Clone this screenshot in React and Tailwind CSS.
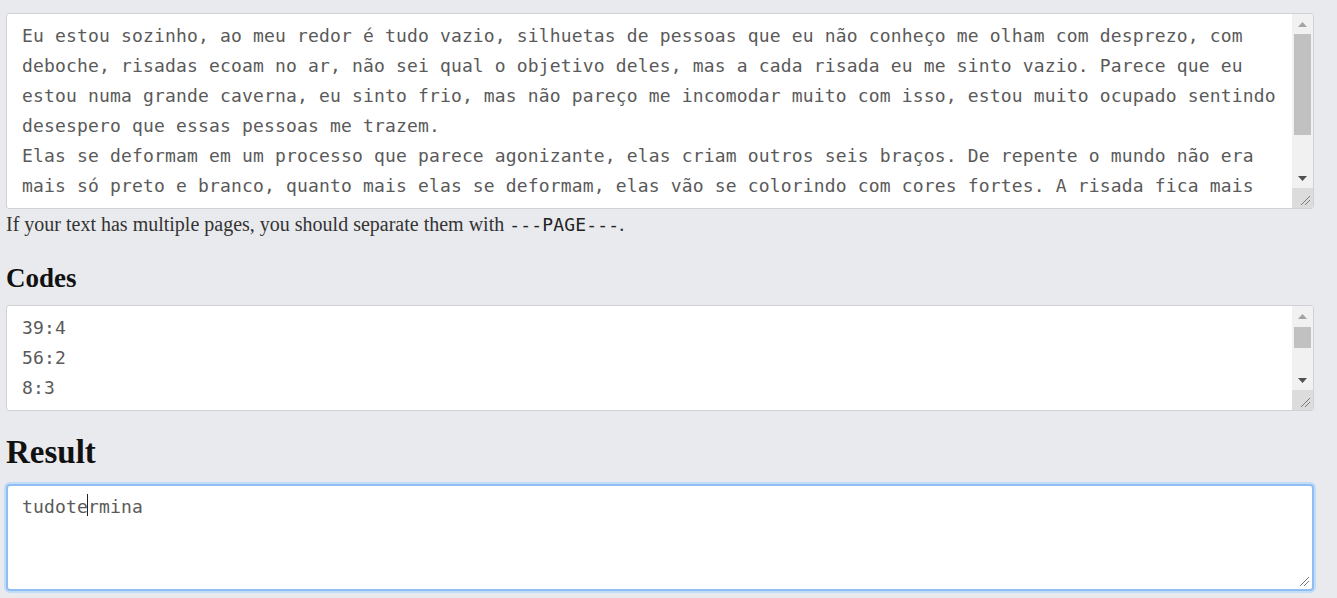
import React from "react";

const mono = { fontFamily: '"DejaVu Sans Mono", "Liberation Mono", monospace' };
const serif = { fontFamily: '"Liberation Serif", "DejaVu Serif", serif' };

function Arrow({ dir, color }) {
  return (
    <svg width="9" height="5" viewBox="0 0 9 5">
      {dir === "up" ? (
        <polygon points="0,5 9,5 4.5,0" fill={color} />
      ) : (
        <polygon points="0,0 9,0 4.5,5" fill={color} />
      )}
    </svg>
  );
}

function Grip() {
  return (
    <svg width="12" height="12" viewBox="0 0 12 12">
      <line x1="2" y1="11" x2="11" y2="2" stroke="#7a7a7a" strokeWidth="1" />
      <line x1="6" y1="11" x2="11" y2="6" stroke="#7a7a7a" strokeWidth="1" />
    </svg>
  );
}

function Scrollbar({ thumbTop, thumbHeight }) {
  return (
    <div className="flex w-[21px] shrink-0 flex-col">
      <div className="flex flex-1 flex-col bg-[#f1f1f1]">
        <div className="flex h-[20px] items-center justify-center">
          <Arrow dir="up" color="#a3a3a3" />
        </div>
        <div className="flex flex-1 flex-col px-[2px]">
          <div style={{ height: thumbTop }} />
          <div className="bg-[#c1c1c1]" style={{ height: thumbHeight }} />
        </div>
        <div className="flex h-[20px] items-center justify-center">
          <Arrow dir="down" color="#505050" />
        </div>
      </div>
      <div className="flex h-[20px] items-end justify-end bg-[#dcdcdc] pb-[2px] pr-[2px]">
        <Grip />
      </div>
    </div>
  );
}

const storyLines = [
  "Eu estou sozinho, ao meu redor é tudo vazio, silhuetas de pessoas que eu não conheço me olham com desprezo, com",
  "deboche, risadas ecoam no ar, não sei qual o objetivo deles, mas a cada risada eu me sinto vazio. Parece que eu",
  "estou numa grande caverna, eu sinto frio, mas não pareço me incomodar muito com isso, estou muito ocupado sentindo",
  "desespero que essas pessoas me trazem.",
  "Elas se deformam em um processo que parece agonizante, elas criam outros seis braços. De repente o mundo não era",
  "mais só preto e branco, quanto mais elas se deformam, elas vão se colorindo com cores fortes. A risada fica mais",
];

function TextLines({ lines }) {
  return (
    <div
      className="flex-1 overflow-hidden pl-[15px] pt-[7px] text-[18px] leading-[30px] tracking-[0.16px] text-[#5a5a5a]"
      style={mono}
    >
      {lines.map((l, i) => (
        <div key={i} className="whitespace-pre">
          {l}
        </div>
      ))}
    </div>
  );
}

export default function App() {
  return (
    <div className="min-h-[598px] w-full bg-[#e9eaee] pl-[6px] pt-[13px]">
      <div className="w-[1308px]">
        <div className="flex h-[196px] overflow-hidden rounded-[3px] border border-[#cfd1d5] bg-white">
          <TextLines lines={storyLines} />
          <Scrollbar thumbTop={0} thumbHeight={101} />
        </div>

        <p className="h-[30px] text-[20px] leading-[30px] text-[#333]" style={serif}>
          If your text has multiple pages, you should separate them with{" "}
          <span className="text-[18px] tracking-[0.16px] text-[#222]" style={mono}>
            ---PAGE---
          </span>
          .
        </p>

        <h2
          className="mt-[24px] h-[30px] text-[27px] font-bold leading-[30px] text-[#111]"
          style={serif}
        >
          Codes
        </h2>

        <div className="mt-[12px] flex h-[106px] overflow-hidden rounded-[3px] border border-[#cfd1d5] bg-white">
          <TextLines lines={["39:4", "56:2", "8:3"]} />
          <Scrollbar thumbTop={1} thumbHeight={21} />
        </div>

        <h2
          className="mt-[23px] h-[36px] text-[33px] font-bold leading-[36px] text-[#111]"
          style={serif}
        >
          Result
        </h2>

        <div className="mt-[14px] flex h-[107px] rounded-[4px] border-2 border-[#8fbef3] bg-white shadow-[0_0_0_2px_#c2dcf8]">
          <div
            className="flex-1 pl-[14px] pt-[6px] text-[18px] leading-[30px] tracking-[0.16px] text-[#5a5a5a]"
            style={mono}
          >
            <span className="whitespace-pre">tudote</span>
            <span className="relative">
              <span className="absolute left-[-1px] top-[-2px] h-[22px] w-px bg-[#222]" />
            </span>
            <span className="whitespace-pre">rmina</span>
          </div>
          <div className="flex w-[16px] items-end justify-end pb-[2px] pr-[2px]">
            <Grip />
          </div>
        </div>
      </div>
    </div>
  );
}
